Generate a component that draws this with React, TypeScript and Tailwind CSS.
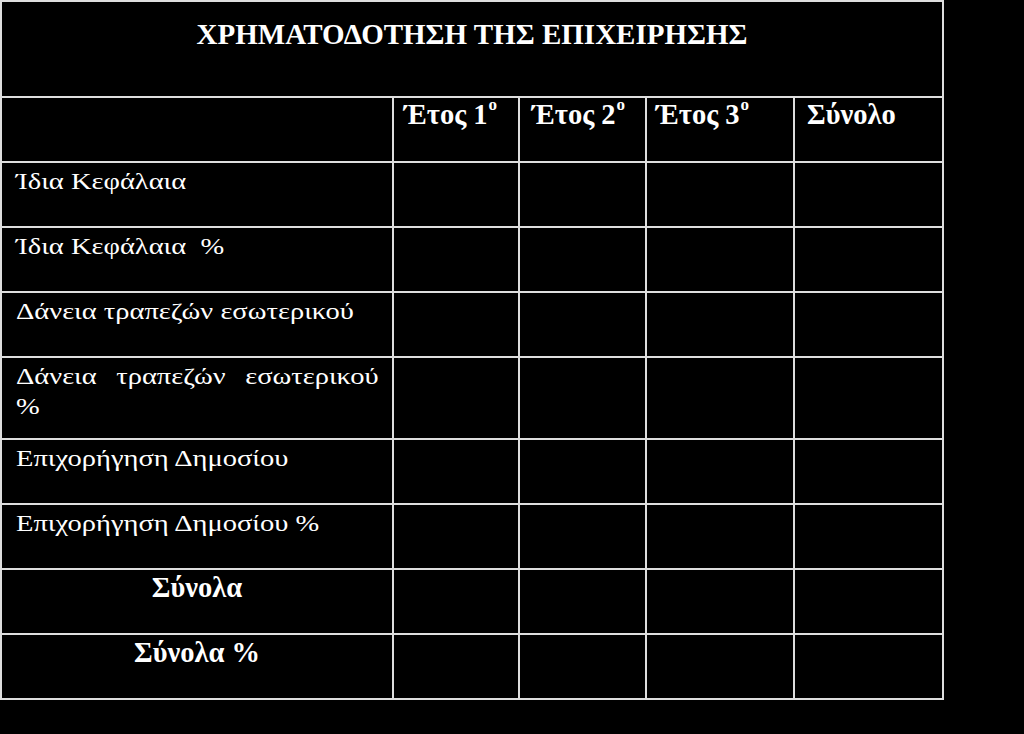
import React from "react";

const serif = { fontFamily: '"Liberation Serif", "Times New Roman", serif' };

// regular labels in the source are set in a horizontally stretched face
function Wide({ children }: { children: React.ReactNode }) {
  return <span className="inline-block origin-left scale-x-[1.213] whitespace-pre">{children}</span>;
}

const rows: { label: React.ReactNode; h: string; bold?: boolean }[] = [
  { label: <Wide>Ίδια Κεφάλαια</Wide>, h: "h-[65px]" },
  { label: <Wide>Ίδια Κεφάλαια  %</Wide>, h: "h-[65px]" },
  { label: <Wide>Δάνεια τραπεζών εσωτερικού</Wide>, h: "h-[65px]" },
  {
    label: (
      <span className="block w-[299px] origin-left scale-x-[1.213]">
        <span className="flex justify-between">
          <span>Δάνεια</span>
          <span>τραπεζών</span>
          <span>εσωτερικού</span>
        </span>
        <span className="block">%</span>
      </span>
    ),
    h: "h-[82px]",
  },
  { label: <Wide>Επιχορήγηση Δημοσίου</Wide>, h: "h-[65px]" },
  { label: <Wide>Επιχορήγηση Δημοσίου %</Wide>, h: "h-[65px]" },
  { label: "Σύνολα", h: "h-[65px]", bold: true },
  { label: "Σύνολα %", h: "h-[65px]", bold: true },
];

function Year({ n }: { n: number }) {
  return (
    <>
      Έτος {n}
      <sup className="text-[17px] leading-none align-[6px] ml-[1px]">ο</sup>
    </>
  );
}

const cell = "border-2 border-[#dedede] align-top p-0";

export default function App() {
  return (
    <div className="w-[1024px] h-[734px] bg-black text-white overflow-hidden" style={serif}>
      <table className="table-fixed border-collapse w-[942px] text-[28.5px] leading-[31px]">
        <colgroup>
          <col className="w-[392px]" />
          <col className="w-[126px]" />
          <col className="w-[127px]" />
          <col className="w-[148px]" />
          <col className="w-[149px]" />
        </colgroup>
        <tbody>
          <tr className="h-[96px]">
            <td colSpan={5} className={`${cell} text-center font-bold text-[29px] pt-[17px]`}>
              ΧΡΗΜΑΤΟΔΟΤΗΣΗ ΤΗΣ ΕΠΙΧΕΙΡΗΣΗΣ
            </td>
          </tr>
          <tr className="h-[65px] font-bold">
            <td className={cell}></td>
            <td className={`${cell} pl-[10px] pt-[1px]`}>
              <Year n={1} />
            </td>
            <td className={`${cell} pl-[12px] pt-[1px]`}>
              <Year n={2} />
            </td>
            <td className={`${cell} pl-[9px] pt-[1px]`}>
              <Year n={3} />
            </td>
            <td className={`${cell} pl-[12px] pt-[1px]`}>Σύνολο</td>
          </tr>
          {rows.map((r, i) => (
            <tr key={i} className={r.h}>
              <td
                className={`${cell} ${
                  r.bold
                    ? "font-bold text-center pt-[2px]"
                    : "pl-[14px] pr-[13px] pt-[3px] text-[23.5px] leading-[30px]"
                }`}
              >
                {r.label}
              </td>
              <td className={cell}></td>
              <td className={cell}></td>
              <td className={cell}></td>
              <td className={cell}></td>
            </tr>
          ))}
        </tbody>
      </table>
    </div>
  );
}
